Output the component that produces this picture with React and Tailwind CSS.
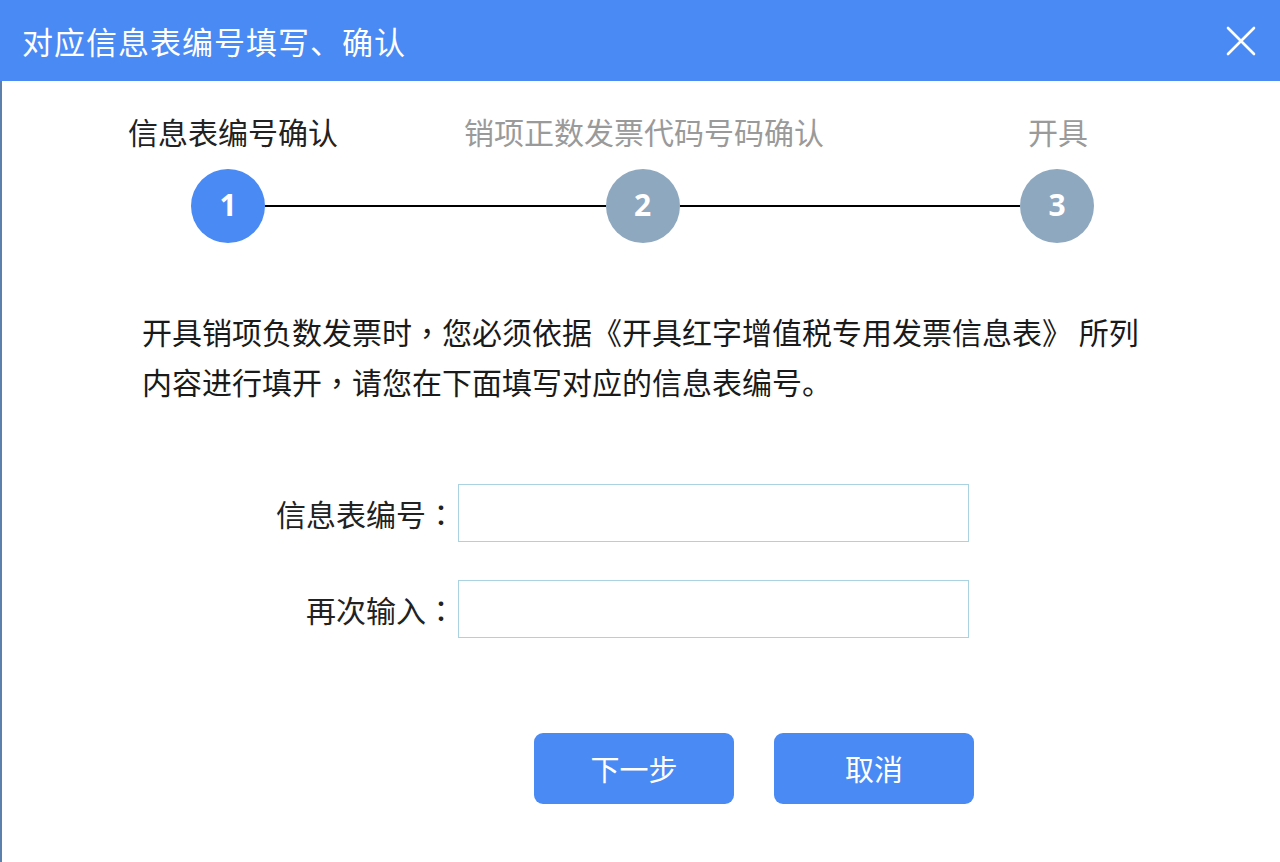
import React from "react";

const font = { fontFamily: '"Noto Sans CJK SC", "Noto Sans", sans-serif' };
const tc = { fontFamily: '"Noto Sans CJK TC", "Noto Sans CJK SC", sans-serif' };
const num = { fontFamily: '"Open Sans", sans-serif' };

function P({ c }) {
  return <span style={tc}>{c}</span>;
}

export default function App() {
  return (
    <div className="w-[1280px] h-[862px] bg-white overflow-hidden text-[#222]" style={font}>
      <div className="h-[81px] bg-[#4a8af4] flex items-center justify-between pl-[22px] pr-[24px]">
        <div className="text-white text-[31px] leading-none tracking-[1px]">对应信息表编号填写、确认</div>
        <svg width="30" height="30" viewBox="0 0 30 30" className="block">
          <path d="M2 2 L28 28 M28 2 L2 28" stroke="white" strokeWidth="2.6" strokeLinecap="round" />
        </svg>
      </div>
      <div className="h-[781px] border-l-2 border-[#5a80ab] bg-white">
        <div className="pl-[21px] pr-[15px] pt-[34px]">
          <div className="grid grid-cols-3 text-center text-[30px] leading-[32px]">
            <div className="text-[#222] pl-[6px]">信息表编号确认</div>
            <div className="text-[#9a9a9a]">销项正数发票代码号码确认</div>
            <div className="text-[#9a9a9a]">开具</div>
          </div>
        </div>
        <div className="flex items-center ml-[189px] w-[903px] mt-[22px]">
          <div className="w-[74px] h-[74px] rounded-full bg-[#4a8af4] flex items-center justify-center text-white text-[30px] leading-none font-bold pb-[3px]" style={num}>1</div>
          <div className="flex-1 h-[2px] bg-black"></div>
          <div className="w-[74px] h-[74px] rounded-full bg-[#8ea8bf] flex items-center justify-center text-white text-[30px] leading-none font-bold pb-[3px]" style={num}>2</div>
          <div className="flex-1 h-[2px] bg-black"></div>
          <div className="w-[74px] h-[74px] rounded-full bg-[#8ea8bf] flex items-center justify-center text-white text-[30px] leading-none font-bold pb-[3px]" style={num}>3</div>
        </div>
        <div className="ml-[140px] mt-[63px] text-[30px] leading-[50px] text-[#1a1a1a]">
          <div>开具销项负数发票时<P c="，" />您必须依据《开具红字增值税专用发票信息表》 所列</div>
          <div>内容进行填开<P c="，" />请您在下面填写对应的信息表编号。</div>
        </div>
        <div className="mt-[78px] flex flex-col gap-[38px]">
          <div className="flex items-center">
            <div className="w-[454px] text-right text-[30px]">信息表编号<P c="：" /></div>
            <div className="ml-[2px] w-[511px] h-[58px] border border-[#a9d2e2] bg-white"></div>
          </div>
          <div className="flex items-center">
            <div className="w-[454px] text-right text-[30px]">再次输入<P c="：" /></div>
            <div className="ml-[2px] w-[511px] h-[58px] border border-[#a9d2e2] bg-white"></div>
          </div>
        </div>
        <div className="flex ml-[532px] mt-[95px] gap-[40px]">
          <div className="w-[200px] h-[71px] rounded-[9px] bg-[#4a8af4] text-white text-[29px] flex items-center justify-center">下一步</div>
          <div className="w-[200px] h-[71px] rounded-[9px] bg-[#4a8af4] text-white text-[29px] flex items-center justify-center">取消</div>
        </div>
      </div>
    </div>
  );
}
